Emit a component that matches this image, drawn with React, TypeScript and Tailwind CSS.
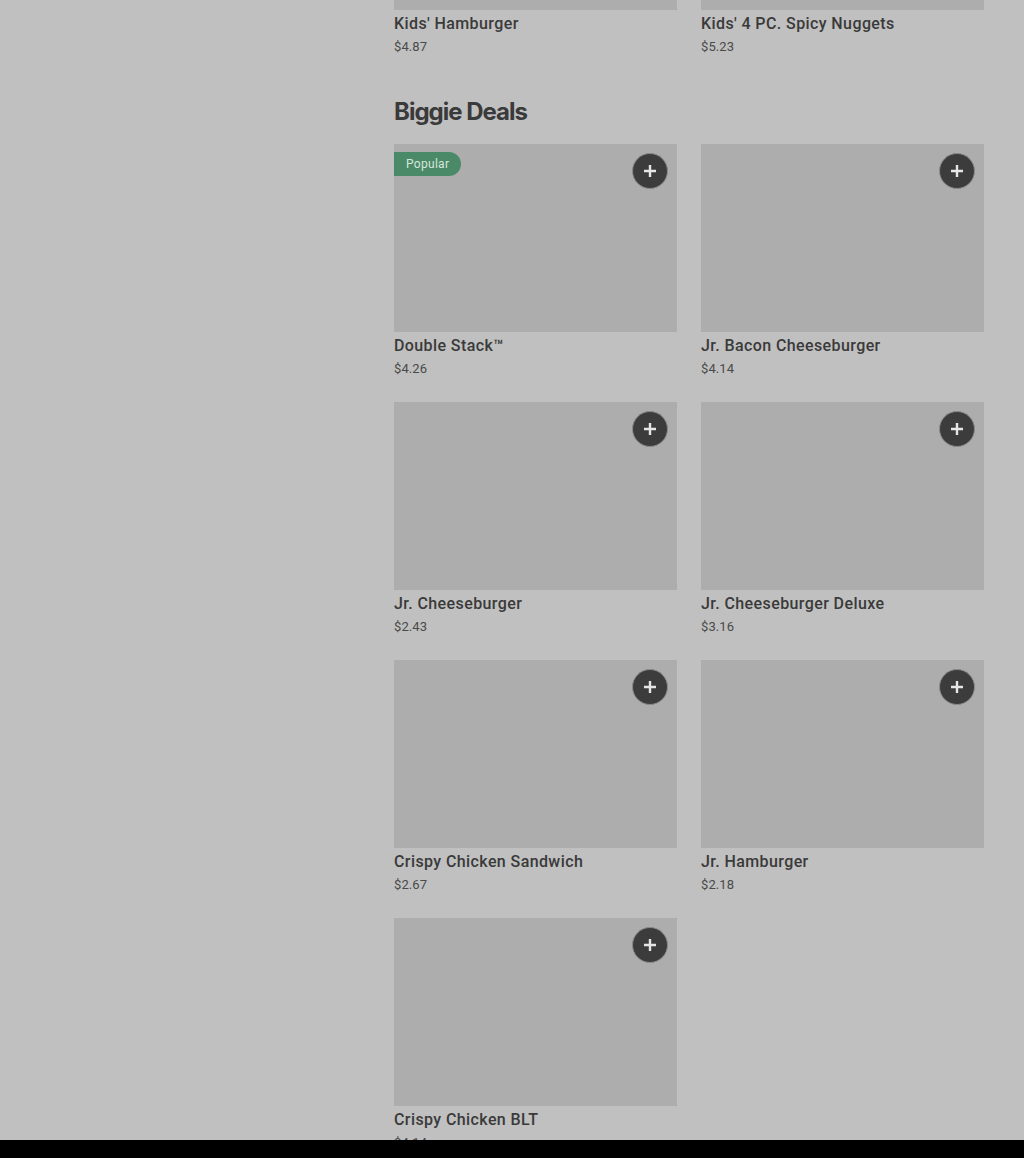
import React from "react";

type Item = { name: string; price: string; popular?: boolean };

const prev: Item[] = [
  { name: "Kids' Hamburger", price: "$4.87" },
  { name: "Kids' 4 PC. Spicy Nuggets", price: "$5.23" },
];

const items: Item[] = [
  { name: "Double Stack™", price: "$4.26", popular: true },
  { name: "Jr. Bacon Cheeseburger", price: "$4.14" },
  { name: "Jr. Cheeseburger", price: "$2.43" },
  { name: "Jr. Cheeseburger Deluxe", price: "$3.16" },
  { name: "Crispy Chicken Sandwich", price: "$2.67" },
  { name: "Jr. Hamburger", price: "$2.18" },
  { name: "Crispy Chicken BLT", price: "$4.14" },
];

function Card({ item, button = true }: { item: Item; button?: boolean }) {
  return (
    <div className="flex flex-col">
      <div className="relative h-[188px] bg-[#adadad]">
        {item.popular && (
          <div className="absolute left-0 top-[8px] flex h-[24px] w-[67px] items-center rounded-r-full bg-[#4a8a68] pl-[12px] text-[12px] tracking-[0.3px] text-[#d6e6dc]">
            Popular
          </div>
        )}
        {button && (
          <div className="absolute right-[9px] top-[9px] flex h-[36px] w-[36px] items-center justify-center rounded-full border border-[#8a8a8a] bg-[#3c3c3c]">
            <svg width="14" height="14" viewBox="0 0 14 14">
              <path d="M7 1v12M1 7h12" stroke="#e6e6e6" strokeWidth="2.4" strokeLinecap="butt" />
            </svg>
          </div>
        )}
      </div>
      <div className="mt-[4px] text-[16px] font-medium leading-[20px] tracking-[0.4px] text-[#3a3a3a]">{item.name}</div>
      <div className="mt-[3px] text-[13px] leading-[20px] tracking-[0.1px] text-[#4a4a4a]">{item.price}</div>
    </div>
  );
}

export default function App() {
  return (
    <div
      className="min-h-screen overflow-hidden bg-[#c0c0c0]"
      style={{ fontFamily: "Roboto, 'Liberation Sans', sans-serif" }}
    >
      <div className="ml-[394px] mr-[40px]">
        <div className="mt-[-178px] grid grid-cols-2 gap-x-[24px]">
          {prev.map((it) => (
            <Card key={it.name} item={it} />
          ))}
        </div>
        <h2
          className="mt-[39px] mb-[16px] text-[24px] font-bold leading-[32px] tracking-[-1px] text-[#3a3a3a]"
          style={{ fontFamily: "Inter, 'Liberation Sans', sans-serif" }}
        >
          Biggie Deals
        </h2>
        <div className="grid grid-cols-2 gap-x-[24px] gap-y-[23px] pb-[60px]">
          {items.map((it) => (
            <Card key={it.name} item={it} />
          ))}
        </div>
      </div>
      <div className="fixed bottom-0 left-0 right-0 h-[18px] bg-black" />
    </div>
  );
}
